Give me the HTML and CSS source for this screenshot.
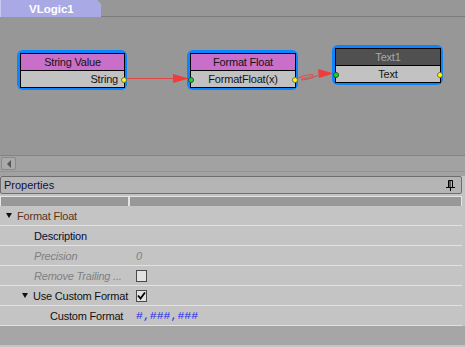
FILE: index.html
```html
<!DOCTYPE html>
<html>
<head>
<meta charset="utf-8">
<link rel="stylesheet" href="styles.css">
</head>
<body>
<div class="app">
  <div class="tabbar">
    <div class="tab"><span class="tabtext">VLogic1</span></div>
    <div class="tabfill"></div>
  </div>
  <div class="canvas">
    <svg class="wires" width="465" height="138" viewBox="0 0 465 138">
      <line x1="126" y1="61.5" x2="176" y2="61.5" stroke="#e04848" stroke-width="1"/>
      <polygon points="173,57 189,61.5 173,66" fill="#f03c3c"/>
      <path d="M296,62 C302,59 310,57 313,58 C316,60 302,61 301,62.5 C303,64 313,61 320,57.5" fill="none" stroke="#e04848" stroke-width="1"/>
      <polygon points="318,52 334,56.5 319,61" fill="#f03c3c"/>
    </svg>
    <div class="node n1">
      <div class="box">
        <div class="nhead">String Value</div>
        <div class="nbody right">String</div>
      </div>
      <span class="dot out"></span>
    </div>
    <div class="node n2">
      <div class="box">
        <div class="nhead">Format Float</div>
        <div class="nbody">FormatFloat(x)</div>
      </div>
      <span class="dot in"></span>
      <span class="dot out"></span>
    </div>
    <div class="node n3">
      <div class="box">
        <div class="nhead dark">Text1</div>
        <div class="nbody">Text</div>
      </div>
      <span class="dot in"></span>
      <span class="dot out"></span>
    </div>
  </div>
  <div class="hscroll">
    <div class="sbtn"><span class="larrow"></span></div>
  </div>
  <div class="gap1"></div>
  <div class="panel">
    <div class="phead">
      <span class="ptitle">Properties</span>
      <svg class="pin" width="9" height="11" viewBox="0 0 9 11">
        <path d="M2.5 0.5 H6.5 V7 M2.5 0.5 V7" fill="none" stroke="#000" stroke-width="1"/>
        <line x1="4" y1="1" x2="4" y2="7" stroke="#000" stroke-width="1"/>
        <line x1="0" y1="7.5" x2="9" y2="7.5" stroke="#000" stroke-width="1"/>
        <line x1="4.5" y1="8" x2="4.5" y2="11" stroke="#000" stroke-width="1"/>
      </svg>
    </div>
    <div class="gap2"></div>
    <div class="grid">
      <div class="colheads">
        <div class="ch c1"></div>
        <div class="ch c2"></div>
      </div>
      <div class="row">
        <div class="name l0"><span class="tri"></span><span class="cat">Format Float</span></div>
        <div class="val"></div>
      </div>
      <div class="row">
        <div class="name l1 navy">Description</div>
        <div class="val"></div>
      </div>
      <div class="row">
        <div class="name l1 dis">Precision</div>
        <div class="val dis">0</div>
      </div>
      <div class="row">
        <div class="name l1 dis">Remove Trailing ...</div>
        <div class="val"><span class="chk"></span></div>
      </div>
      <div class="row">
        <div class="name l1b"><span class="tri"></span><span>Use Custom Format</span></div>
        <div class="val"><span class="chk on"><svg width="9" height="9" viewBox="0 0 9 9"><path d="M1 4.5 L3.5 7.5 L8 1.5" fill="none" stroke="#000" stroke-width="1.8"/></svg></span></div>
      </div>
      <div class="row">
        <div class="name l2">Custom Format</div>
        <div class="val code">#,###,###</div>
      </div>
      <div class="filler"></div>
    </div>
  </div>
</div>
</body>
</html>
```
FILE: styles.css
```css
* { box-sizing: border-box; }
html, body { margin: 0; padding: 0; }
body {
  width: 465px;
  height: 347px;
  overflow: hidden;
  background: #979797;
  font-family: "Liberation Sans", Arial, sans-serif;
  font-size: 11px;
  letter-spacing: -0.2px;
  color: #111;
}
.app { display: flex; flex-direction: column; width: 465px; height: 347px; }

.tabbar { display: flex; height: 17px; background: #979797; }
.tab {
  flex: 0 0 101px;
  width: 101px;
  height: 17px;
  background: #a9a9e6;
  clip-path: polygon(0 0, 97px 0, 101px 4px, 101px 100%, 0 100%);
  border-left: 1px solid #c8c8f0;
  display: flex;
  align-items: center;
  padding-left: 28px;
}
.tabtext {
  color: #fff;
  font-weight: bold;
  font-size: 11.5px;
  letter-spacing: 0;
}
.tabfill { flex: 1; border-bottom: 1px solid #7c7c7c; }

.canvas { position: relative; height: 138px; background: #979797; }
.wires { position: absolute; left: 0; top: 0; }
.node {
  position: absolute;
  background: #0a84ff;
  border-radius: 6px;
  padding: 3px 2px 2px 3px;
}
.n1 { left: 17px; top: 33px; width: 110px; }
.n2 { left: 187px; top: 33px; width: 111px; }
.n3 { left: 332px; top: 28px; width: 111px; }
.box { border: 1px solid #000; display: flex; flex-direction: column; }
.nhead {
  height: 17px;
  background: #c96fc9;
  border-bottom: 1px solid #000;
  display: flex;
  align-items: center;
  justify-content: center;
  color: #141414;
}
.nhead.dark { background: #505050; color: #a8a8a8; }
.nbody {
  height: 16px;
  background: #c2c2c2;
  display: flex;
  align-items: center;
  justify-content: center;
  color: #141414;
}
.nbody.right { justify-content: flex-end; padding-right: 6px; }
.dot {
  position: absolute;
  width: 6px;
  height: 6px;
  border-radius: 50%;
  bottom: 7px;
}
.dot.out { right: 0; background: #ffff10; border: 1px solid #707040; }
.dot.in { left: 1px; background: #10e010; border: 1px solid #404040; }

.hscroll {
  height: 17px;
  background: #a2a2a2;
  border-top: 1px solid #838383;
  border-bottom: 1px solid #939393;
  padding: 1px 0 0 1px;
}
.sbtn {
  width: 15px;
  height: 13px;
  background: #aaaaaa;
  border: 1px solid #8a8a8a;
  border-radius: 2px;
  display: flex;
  align-items: center;
  justify-content: center;
}
.larrow {
  width: 0; height: 0;
  border-top: 4px solid transparent;
  border-bottom: 4px solid transparent;
  border-right: 4px solid #555;
}
.gap1 { height: 4px; background: #a2a2a2; }

.panel { flex: 1; display: flex; flex-direction: column; background: #c3c3c3; }
.phead {
  height: 18px;
  width: 462px;
  background: #b5b5b5;
  border: 1px solid #6e6e6e;
  border-radius: 2px;
  display: flex;
  align-items: center;
  justify-content: space-between;
  padding: 0 6px 0 3px;
}
.ptitle { color: #10104a; letter-spacing: 0; }
.pin { display: block; }
.gap2 { height: 2px; background: #c3c3c3; }

.grid {
  flex: 1;
  display: flex;
  flex-direction: column;
  width: 462px;
  background: #c4c4c4;
}
.colheads {
  display: flex;
  height: 10px;
  border-top: 1px solid #e4e4e4;
}
.ch { height: 9px; background: #989898; }
.c1 { width: 130px; border-left: 1px solid #e4e4e4; border-right: 2px solid #e4e4e4; }
.c2 { flex: 1; border-right: 1px solid #e4e4e4; }

.row {
  display: flex;
  height: 20px;
  border-bottom: 1px solid #e2e2e2;
  align-items: center;
}
.name {
  width: 136px;
  display: flex;
  align-items: center;
  white-space: nowrap;
  overflow: hidden;
}
.l0 { padding-left: 6px; }
.l1 { padding-left: 34px; }
.l1b { padding-left: 22px; }
.l2 { padding-left: 50px; }
.tri {
  width: 0; height: 0;
  border-left: 3.5px solid transparent;
  border-right: 3.5px solid transparent;
  border-top: 5px solid #111;
  margin-right: 5px;
}
.cat { color: #5c3418; }
.navy { color: #0c0c30; }
.dis { color: #808080; font-style: italic; }
.val { flex: 1; display: flex; align-items: center; }
.chk {
  width: 11px;
  height: 12px;
  border: 1px solid #4a4a4a;
  background: #e2e2e2;
  display: flex;
  align-items: center;
  justify-content: center;
}
.chk.on svg { display: block; }
.code {
  font-family: "Liberation Mono", "Courier New", monospace;
  font-size: 11.5px;
  letter-spacing: 0;
  color: #2626e4;
}
.filler {
  height: 19px;
  background: #a6a6a6;
  width: 465px;
}
```
